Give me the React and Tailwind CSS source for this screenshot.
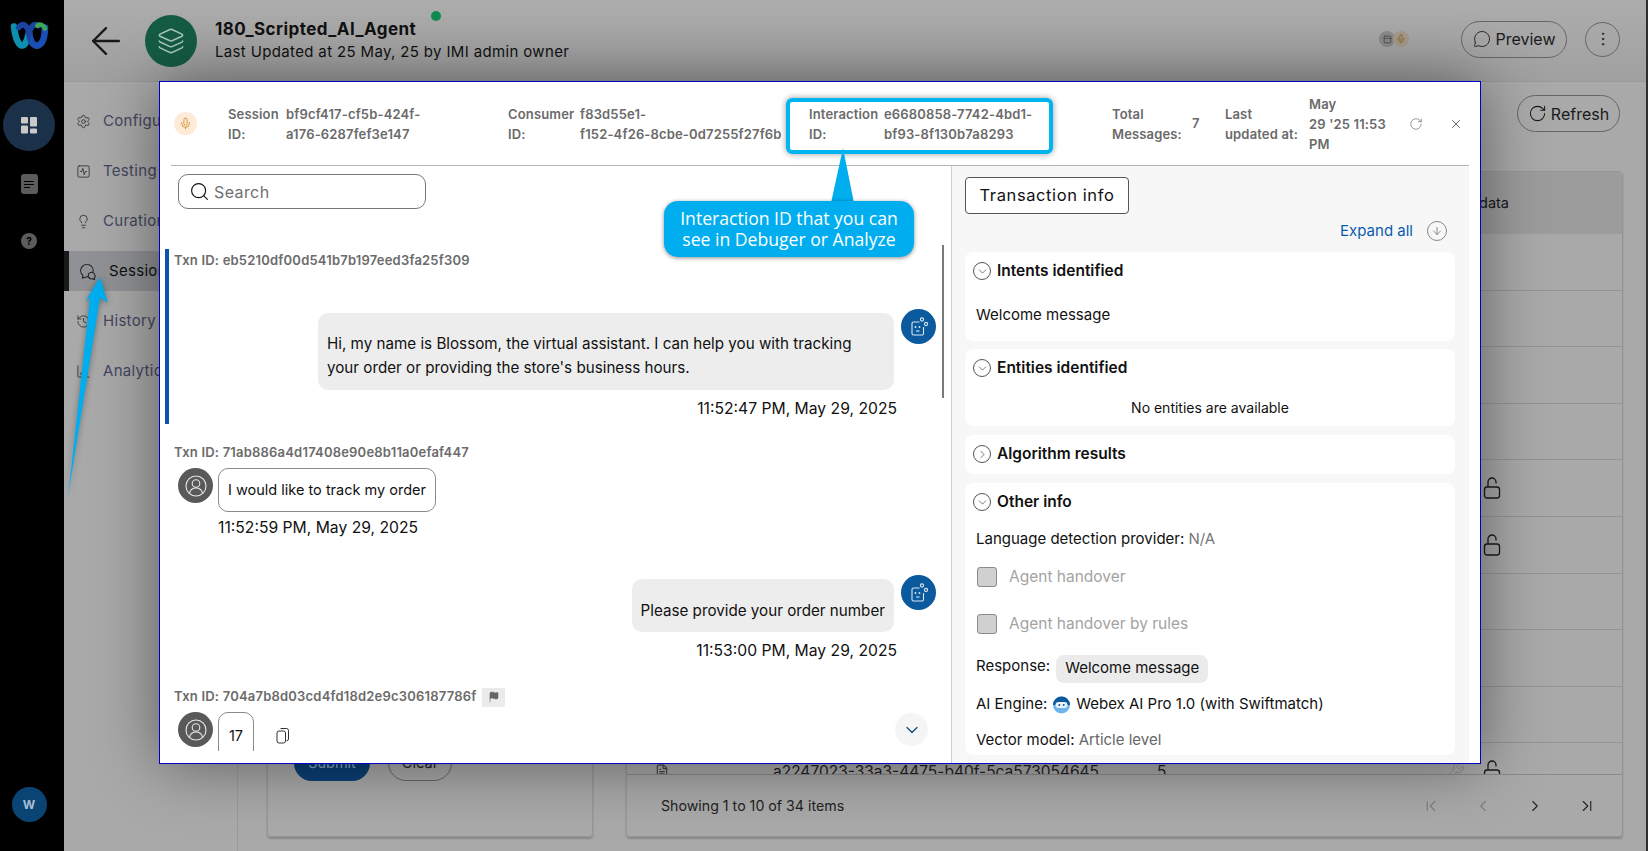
import React from 'react';
import { ChevronDown, ChevronRight, ChevronLeft, ChevronFirst, ChevronLast, Search, X, RotateCw, MessageCircle, MoreVertical, Flag, Layers, Mic, Settings, SquareActivity, Lightbulb, History, BarChart3, FileText, ArrowLeft, ArrowDown, PanelTop, Wrench } from 'lucide-react';

const font = { fontFamily: 'Inter, "Noto Sans", sans-serif' };

const navItems = [
  { label: 'Configuration', icon: Settings },
  { label: 'Testing', icon: SquareActivity },
  { label: 'Curation', icon: Lightbulb },
  { label: 'Sessions', active: true },
  { label: 'History', icon: History },
  { label: 'Analytics', icon: BarChart3 },
];

function ChatsIcon() {
  return (
    <svg width="17" height="17" viewBox="0 0 17 17" fill="none" stroke="#222" strokeWidth="1.1" className="ml-[11px]">
      <path d="M3 12.500A6.200 6.200 0 1 1 12.800 9.500" />
      <path d="M3 12.500L2.500 15L8.500 13.500" />
      <path d="M8.500 13.500A3 3 0 0 1 14.500 11.500A3 3 0 0 1 14 15.500L14.500 16.500L11.500 15.800A3 3 0 0 1 8.500 13.500Z" />
    </svg>
  );
}

function LockIcon() {
  return (
    <svg width="18" height="22" viewBox="0 0 18 22" fill="none" stroke="#1a1a1a" strokeWidth="1.3">
      <rect x="1.500" y="10" width="15" height="11" rx="2.500" />
      <path d="M5 10V5a4 4 0 0 1 8 0v1.500" />
    </svg>
  );
}

function BotAvatar() {
  return (
    <div className="w-[35px] h-[35px] rounded-full bg-[#0b5a9e] flex items-center justify-center shrink-0">
      <svg width="22" height="22" viewBox="0 0 22 22" fill="none" stroke="#dbe8f4" strokeWidth="1.1">
        <path d="M11.500 6H5.500A1.500 1.500 0 0 0 4 7.500V17.500a1.500 1.500 0 0 0 1.500 1.500H14a1.500 1.500 0 0 0 1.500-1.500V11" />
        <circle cx="14" cy="3.500" r="1.600" />
        <circle cx="18" cy="8" r="1.600" />
        <circle cx="7.500" cy="11" r="0.400" fill="#fff" />
        <circle cx="11.500" cy="11" r="0.400" fill="#fff" />
        <path d="M8 15h3.500" />
      </svg>
    </div>
  );
}

function UserAvatar() {
  return (
    <div className="w-[35px] h-[35px] rounded-full bg-[#595959] flex items-center justify-center shrink-0">
      <svg width="24" height="24" viewBox="0 0 24 24" fill="none" stroke="#e8e8e8" strokeWidth="1.1">
        <circle cx="12" cy="12" r="10" />
        <circle cx="12" cy="9.500" r="3.800" />
        <path d="M5.500 19c1-3.500 3.500-5 6.500-5s5.500 1.500 6.500 5" />
      </svg>
    </div>
  );
}

function TxnId({ id, children }) {
  return (
    <div className="flex items-center gap-[6px] h-[20px] text-[13px] tracking-[0.2px] font-semibold text-[#6b6b6b]">
      <span>Txn ID: {id}</span>
      {children}
    </div>
  );
}

function Stamp({ children }) {
  return <div className="text-[15.7px] text-[#111] leading-[20px]">{children}</div>;
}

function HeaderField({ label1, label2, value1, value2, labelWidth, className }) {
  return (
    <div className={`flex text-[13px] tracking-[0.15px] leading-[20px] font-semibold text-[#6a6a6a] ${className}`}>
      <div className={labelWidth}>
        <div>{label1}</div>
        <div>{label2}</div>
      </div>
      <div>
        <div>{value1}</div>
        <div>{value2}</div>
      </div>
    </div>
  );
}

function CardHead({ title, open = true }) {
  const Icon = open ? ChevronDown : ChevronRight;
  return (
    <div className="flex items-center gap-[6px] h-[20px] text-[15.5px] font-semibold text-[#111]">
      <span className="w-[18px] h-[18px] rounded-full border border-[#555] flex items-center justify-center">
        <Icon size={13} strokeWidth={1.3} className="text-[#444]" />
      </span>
      {title}
    </div>
  );
}

function Checkbox({ label, className }) {
  return (
    <div className={`flex items-center gap-[12px] text-[15.5px] text-[#a3a3a3] ${className}`}>
      <span className="w-[20px] h-[20px] rounded-[3px] bg-[#d0d0d0] border border-[#8a8a8a]" />
      {label}
    </div>
  );
}

export default function App() {
  return (
    <div style={font} className="relative w-[1648px] h-[851px] overflow-hidden flex bg-[#a9a9a9]">
      {/* left rail */}
      <aside className="w-[64px] shrink-0 bg-black flex flex-col items-center pr-[6px]">
        <svg width="42" height="30" viewBox="0 0 42 32" className="mt-[20px]" fill="none">
          <path d="M5 7c2 18 8 24 12 18 3-5 3-9 4-11" stroke="#0f8fb0" strokeWidth="7" strokeLinecap="round" />
          <path d="M21 14c1 7 4 15 10 13 5-2 7-10 7-19" stroke="#1a4fb5" strokeWidth="7" strokeLinecap="round" />
          <path d="M10 8c5-6 9-2 11 6 2-7 5-11 10-8" stroke="#1b44a0" strokeWidth="6" strokeLinecap="round" />
          <path d="M30 6c3-2 6-1 8 3" stroke="#3fa653" strokeWidth="5" strokeLinecap="round" />
        </svg>
        <div className="mt-[49px] w-[52px] h-[52px] rounded-full bg-[#1b3049] flex items-center justify-center">
          <svg width="16" height="17" viewBox="0 0 16 17" fill="#c9c9c9">
            <rect x="0" y="0" width="7" height="6.500" rx="1" />
            <rect x="0" y="8.500" width="7" height="8" rx="1" />
            <rect x="9" y="0" width="7" height="9.500" rx="1" />
            <rect x="9" y="11.500" width="7" height="5" rx="1" />
          </svg>
        </div>
        <div className="mt-[23px] w-[17px] h-[20px] rounded-[3px] bg-[#5c5c5c] flex flex-col items-center justify-center gap-[2px]">
          <span className="w-[10px] h-px bg-black" />
          <span className="w-[10px] h-px bg-black" />
          <span className="w-[6px] h-px bg-black self-start ml-[3px]" />
        </div>
        <div className="mt-[39px] w-[16px] h-[16px] rounded-full bg-[#5c5c5c] text-[10px] font-bold text-black flex items-center justify-center">?</div>
        <div className="mt-auto mb-[29px] w-[35px] h-[35px] rounded-full bg-[#0a4474] text-[12px] font-bold text-[#a9c0d4] flex items-center justify-center">W</div>
      </aside>

      <div className="flex-1 flex flex-col min-w-0">
        {/* top bar */}
        <header className="h-[82px] shrink-0 border-b border-[#999] bg-gradient-to-b from-[#adadad] to-[#a0a0a0] flex items-center">
          <ArrowLeft size={44} strokeWidth={1.3} className="ml-[20px] text-[#1a1a1a]" />
          <div className="ml-[17px] w-[52px] h-[52px] rounded-full bg-[#155c45] flex items-center justify-center">
            <Layers size={28} strokeWidth={1.3} className="text-[#a9c9bc]" />
          </div>
          <div className="ml-[18px] relative">
            <div className="text-[17px] tracking-[0.45px] font-bold text-[#111] leading-[22px]">180_Scripted_AI_Agent</div>
            <div className="text-[15px] tracking-[0.35px] text-[#111] leading-[24px]">Last Updated at 25 May, 25 by IMI admin owner</div>
            <span className="absolute left-[216px] top-[-7px] w-[10px] h-[10px] rounded-full bg-[#138a52]" />
          </div>
          <div className="ml-auto -mt-[3px] flex items-center">
            <span className="w-[16px] h-[16px] rounded-full bg-[#8a8a8a] flex items-center justify-center">
              <PanelTop size={9} className="text-[#444]" />
            </span>
            <span className="w-[16px] h-[16px] -ml-[2px] rounded-full bg-[#a59a8c] flex items-center justify-center">
              <Mic size={10} className="text-[#8a6a30]" />
            </span>
            <button className="ml-[52px] w-[106px] h-[37px] rounded-full border border-[#666] flex items-center justify-center gap-[5px] text-[16px] text-[#1a1a1a]">
              <MessageCircle size={18} strokeWidth={1.2} />
              Preview
            </button>
            <button className="ml-[18px] mr-[28px] w-[35px] h-[35px] rounded-full border border-[#666] flex items-center justify-center">
              <MoreVertical size={18} strokeWidth={1.3} className="text-[#222]" />
            </button>
          </div>
        </header>

        <div className="flex-1 flex min-h-0">
          {/* side nav */}
          <nav className="w-[174px] shrink-0 border-r border-[#9b9b9b] pt-[19px]">
            {navItems.map((item) => {
              const Icon = item.icon;
              return (
                <div key={item.label} className={`h-[40px] mb-[10px] flex items-center text-[15px] tracking-[0.3px] ${item.active ? 'bg-[#8f9194] border-l-[5px] border-[#1a1a1a] text-[#111]' : 'text-[#44465e]'}`}>
                  {item.active ? <ChatsIcon /> : <Icon size={15} strokeWidth={1.2} className="ml-[12px] text-[#222]" />}
                  <span className="ml-[12px]">{item.label}</span>
                </div>
              );
            })}
          </nav>

          {/* content behind the modal */}
          <main className="flex-1 relative min-w-0">
            <div className="flex justify-end pt-[13px] pr-[28px]">
              <button className="w-[103px] h-[37px] rounded-full border border-[#666] flex items-center justify-center gap-[4px] text-[16px] text-[#1a1a1a]">
                <RotateCw size={19} strokeWidth={1.3} />
                Refresh
              </button>
            </div>
            <div className="flex gap-[33px] mt-[39px] pl-[29px] pr-[25px] h-[666px]">
              <section className="w-[326px] shrink-0 rounded-[4px] border border-[#969696] shadow-[0_2px_2px_rgba(0,0,0,0.2)] flex flex-col justify-end pb-[55px] pl-[26px]">
                <div className="flex gap-[18px]">
                  <button className="w-[76px] h-[36px] rounded-full bg-[#0a3f75] text-[14.5px] text-[#8aa7c4]">Submit</button>
                  <button className="w-[64px] h-[36px] rounded-full border border-[#666] text-[14.5px] text-[#222]">Clear</button>
                </div>
              </section>
              <section className="flex-1 rounded-[4px] border border-[#969696] shadow-[0_2px_2px_rgba(0,0,0,0.2)] flex flex-col min-w-0">
                <div className="h-[62px] shrink-0 bg-[#9c9c9c] flex items-center justify-end pr-[113px] text-[14.5px] text-[#1a1a1a]">data</div>
                <div className="h-[541px] shrink-0 overflow-hidden border-b border-[#8a8a8a]">
                  {['', '', '', '', 'lock', 'lock', '', '', '', ''].map((kind, i) => (
                    <div key={i} className="h-[56.6px] border-b border-[#949494] flex items-center justify-end pr-[121px] text-[#1a1a1a]">
                      {kind === 'lock' && <LockIcon />}
                      {i === 9 && (
                        <div className="w-full flex items-center pl-[28px] text-[15.5px] text-[#222]">
                          <FileText size={14} className="text-[#444]" />
                          <span className="ml-[104px]">a2247023-33a3-4475-b40f-5ca573054645</span>
                          <span className="ml-[58px]">5</span>
                          <Wrench size={20} strokeWidth={1.2} className="ml-auto text-[#8a8a8a]" />
                          <span className="ml-[18px]"><LockIcon /></span>
                        </div>
                      )}
                    </div>
                  ))}
                </div>
                <div className="flex-1 flex items-center pl-[34px] pr-[26px] text-[14.2px] text-[#222]">
                  Showing 1 to 10 of 34 items
                  <div className="ml-auto flex items-center gap-[34px]">
                    <ChevronFirst size={18} strokeWidth={1.5} className="text-[#7d7d7d]" />
                    <ChevronLeft size={18} strokeWidth={1.5} className="text-[#7d7d7d]" />
                    <ChevronRight size={18} strokeWidth={1.5} className="text-[#222]" />
                    <ChevronLast size={18} strokeWidth={1.5} className="text-[#222]" />
                  </div>
                </div>
              </section>
            </div>
          </main>
        </div>
      </div>

      {/* dark strip along the window edge */}
      <span className="absolute right-0 top-0 w-[2px] h-full bg-[#2e2e2e]" />

      {/* arrow pointing at Sessions */}
      <svg className="absolute left-[60px] top-[270px] drop-shadow-[0_1px_3px_rgba(0,0,0,0.35)]" width="60" height="230" viewBox="0 0 60 230">
        <path d="M40 7 L48 33 L40 28 L8 227 L30 28 L25 32 Z" fill="#00aeef" />
      </svg>

      {/* session modal */}
      <div className="absolute left-[159px] top-[81px] w-[1322px] h-[683px] bg-white border border-[#0000c8] shadow-[0_0_60px_rgba(0,0,0,0.45)] flex flex-col">
        <div className="h-[84px] shrink-0 mx-[11px] border-b border-[#b5b5b5] relative flex items-center">
          <span className="ml-[3px] w-[23px] h-[23px] rounded-full bg-[#fdebd8] flex items-center justify-center">
            <Mic size={13} strokeWidth={1.6} className="text-[#d68a2e]" />
          </span>
          <HeaderField className="ml-[31px] w-[280px]" labelWidth="w-[58px]" label1="Session" label2="ID:" value1="bf9cf417-cf5b-424f-" value2="a176-6287fef3e147" />
          <HeaderField className="w-[301px]" labelWidth="w-[72px]" label1="Consumer" label2="ID:" value1="f83d55e1-" value2="f152-4f26-8cbe-0d7255f27f6b" />
          <HeaderField className="w-[303px]" labelWidth="w-[75px]" label1="Interaction" label2="ID:" value1="e6680858-7742-4bd1-" value2="bf93-8f130b7a8293" />
          <div className="w-[80px] text-[13px] tracking-[0.15px] leading-[20px] font-semibold text-[#6a6a6a]">
            <div>Total</div>
            <div>Messages:</div>
          </div>
          <span className="text-[13px] font-semibold text-[#6a6a6a] w-[33px]">7</span>
          <div className="w-[84px] text-[13px] tracking-[0.15px] leading-[20px] font-semibold text-[#6a6a6a]">
            <div>Last</div>
            <div className="whitespace-nowrap">updated at:</div>
          </div>
          <div className="w-[90px] text-[13px] tracking-[0.15px] leading-[20px] font-semibold text-[#6a6a6a]">
            <div>May</div>
            <div className="whitespace-nowrap">29 '25 11:53</div>
            <div>PM</div>
          </div>
          <RotateCw size={14} strokeWidth={1} className="ml-[10px] text-[#555]" />
          <X size={14} strokeWidth={1.2} className="ml-[26px] text-[#222]" />
        </div>

        <div className="flex-1 flex min-h-0 mr-[11px]">
          {/* chat pane */}
          <div className="w-[791px] shrink-0 relative">
            <div className="h-[585px] overflow-hidden">
              <div className="ml-[18px] mt-[8px] w-[248px] h-[35px] rounded-[10px] border border-[#777] flex items-center pl-[10px] gap-[4px] text-[16px] tracking-[0.4px] text-[#6f6f6f]">
                <Search size={21} strokeWidth={1.3} className="text-[#111]" />
                Search
              </div>

              <div className="mt-[40px] ml-[5px] border-l-[4px] border-[#0b55a8] h-[175px] relative">
                <div className="pl-[5px] pt-[2px]"><TxnId id="eb5210df00d541b7b197eed3fa25f309" /></div>
                <div className="flex justify-end mt-[38px] pr-[15px] gap-[7px]">
                  <div className="w-[576px] h-[77px] mt-[4px] rounded-[10px] bg-[#ededed] pl-[9px] pt-[19px] text-[15.2px] leading-[24px] text-[#111]">
                    Hi, my name is Blossom, the virtual assistant. I can help you with tracking<br />your order or providing the store's business hours.
                  </div>
                  <BotAvatar />
                </div>
                <div className="flex justify-end pr-[54px] mt-[9px]"><Stamp>11:52:47 PM, May 29, 2025</Stamp></div>
              </div>

              <div className="ml-[14px] mt-[19px]"><TxnId id="71ab886a4d17408e90e8b11a0efaf447" /></div>
              <div className="ml-[18px] mt-[5px] flex gap-[5px]">
                <UserAvatar />
                <div className="h-[44px] rounded-[10px] border border-[#8a8a8a] px-[9px] flex items-center text-[14.5px] text-[#111]">I would like to track my order</div>
              </div>
              <div className="ml-[58px] mt-[6px]"><Stamp>11:52:59 PM, May 29, 2025</Stamp></div>

              <div className="flex justify-end gap-[7px] mt-[37px] pr-[15px]">
                <div className="h-[53px] mt-[4px] rounded-[10px] bg-[#ededed] px-[9px] pt-[20px] text-[15.2px] leading-[24px] text-[#111]">Please provide your order number</div>
                <BotAvatar />
              </div>
              <div className="flex justify-end pr-[54px] mt-[9px]"><Stamp>11:53:00 PM, May 29, 2025</Stamp></div>

              <div className="ml-[14px] mt-[26px]">
                <TxnId id="704a7b8d03cd4fd18d2e9c306187786f">
                  <span className="w-[23px] h-[19px] bg-[#ebebeb] flex items-center justify-center">
                    <Flag size={12} fill="#666" strokeWidth={1.2} className="text-[#666]" />
                  </span>
                </TxnId>
              </div>
              <div className="ml-[18px] mt-[5px] flex gap-[5px]">
                <UserAvatar />
                <div className="w-[36px] h-[60px] rounded-t-[10px] border border-[#8a8a8a] pt-[12px] text-center text-[14.5px] text-[#111]">17</div>
                <svg width="14" height="17" viewBox="0 0 14 17" fill="none" stroke="#333" strokeWidth="1" className="ml-[17px] mt-[15px]">
                  <rect x="1" y="4" width="8.500" height="12" rx="2" />
                  <path d="M4.500 1.500h6a2 2 0 0 1 2 2v8.500a2 2 0 0 1-2 1.800" />
                </svg>
              </div>
            </div>

            {/* chat scrollbar and scroll-down button */}
            <span className="absolute left-[782px] top-[79px] w-[2px] h-[153px] bg-[#7a7a7a]" />
            <button className="absolute left-[735px] top-[547px] w-[33px] h-[33px] rounded-full bg-[#f5f5f5] flex items-center justify-center">
              <ChevronDown size={20} strokeWidth={1.5} className="text-[#0b4f8a]" />
            </button>
          </div>

          {/* transaction pane */}
          <div className="flex-1 bg-[#f7f7f7] border-l border-[#cfcfcf] pl-[13px] pr-[14px] overflow-hidden">
            <button className="mt-[11px] w-[164px] h-[37px] rounded-[4px] border border-[#555] bg-white text-[16.5px] tracking-[0.6px] text-[#111]">Transaction info</button>
            <div className="mt-[7px] h-[20px] flex items-center justify-end gap-[14px] text-[15px] text-[#0a5cad] pr-[8px]">
              Expand all
              <span className="w-[20px] h-[20px] rounded-full border border-[#888] flex items-center justify-center">
                <ArrowDown size={12} strokeWidth={1.3} className="text-[#555]" />
              </span>
            </div>

            <div className="mt-[11px] h-[89px] bg-white rounded-[8px] px-[8px] pt-[9px]">
              <CardHead title="Intents identified" />
              <div className="ml-[3px] mt-[24px] text-[15px] leading-[20px] text-[#111]">Welcome message</div>
            </div>
            <div className="mt-[8px] h-[77px] bg-white rounded-[8px] px-[8px] pt-[9px]">
              <CardHead title="Entities identified" />
              <div className="mt-[20px] text-center text-[14px] leading-[20px] text-[#111]">No entities are available</div>
            </div>
            <div className="mt-[9px] h-[39px] bg-white rounded-[8px] px-[8px] pt-[9px]">
              <CardHead title="Algorithm results" open={false} />
            </div>
            <div className="mt-[9px] h-[272px] bg-white rounded-[8px] px-[8px] pt-[9px] overflow-hidden">
              <CardHead title="Other info" />
              <div className="ml-[3px] mt-[17px] h-[20px] leading-[20px] text-[15px] text-[#111]">Language detection provider: <span className="text-[#777]">N/A</span></div>
              <Checkbox label="Agent handover" className="ml-[4px] mt-[16px]" />
              <Checkbox label="Agent handover by rules" className="ml-[4px] mt-[24px]" />
              <div className="ml-[3px] mt-[19px] flex items-start gap-[6px] text-[15px] text-[#111]">
                <span>Response:</span>
                <span className="h-[28px] px-[9px] rounded-[8px] bg-[#ebebeb] flex items-center">Welcome message</span>
              </div>
              <div className="ml-[3px] mt-[12px] h-[20px] flex items-center gap-[6px] text-[15px] text-[#111]">
                <span>AI Engine:</span>
                <svg width="17" height="18" viewBox="0 0 17 18">
                  <circle cx="8.500" cy="9" r="8.500" fill="#6fb3ee" />
                  <path d="M0 9a8.500 8.500 0 0 1 17 0z" fill="#0b5a9e" />
                  <rect x="2.500" y="6" width="12" height="6" rx="3" fill="#e8f2fb" />
                  <circle cx="6.300" cy="9" r="1" fill="#0b5a9e" />
                  <circle cx="10.700" cy="9" r="1" fill="#0b5a9e" />
                </svg>
                <span>Webex AI Pro 1.0 (with Swiftmatch)</span>
              </div>
              <div className="ml-[3px] mt-[15px] text-[15px] leading-[20px] text-[#111]">Vector model: <span className="text-[#666]">Article level</span></div>
            </div>
          </div>
        </div>
      </div>

      {/* callout over the modal */}
      <div className="absolute left-[786px] top-[98px] w-[267px] h-[56px] rounded-[6px] border-[4px] border-[#00b4f0] shadow-[0_0_6px_rgba(0,0,0,0.4)]" />
      <svg className="absolute left-[825px] top-[148px]" width="36" height="56" viewBox="0 0 36 56">
        <path d="M18 0 L6 55 L29 55 Z" fill="#00aeef" />
      </svg>
      <div className="absolute left-[664px] top-[201px] w-[250px] h-[56px] rounded-[14px] bg-[#00aeef] shadow-[0_1px_4px_rgba(0,0,0,0.45)] flex items-center justify-center text-center text-[17.6px] leading-[21px] text-white" style={{ fontFamily: '"Open Sans", sans-serif' }}>
        <div className="whitespace-nowrap">Interaction ID that you can<br />see in Debuger or Analyze</div>
      </div>
    </div>
  );
}
